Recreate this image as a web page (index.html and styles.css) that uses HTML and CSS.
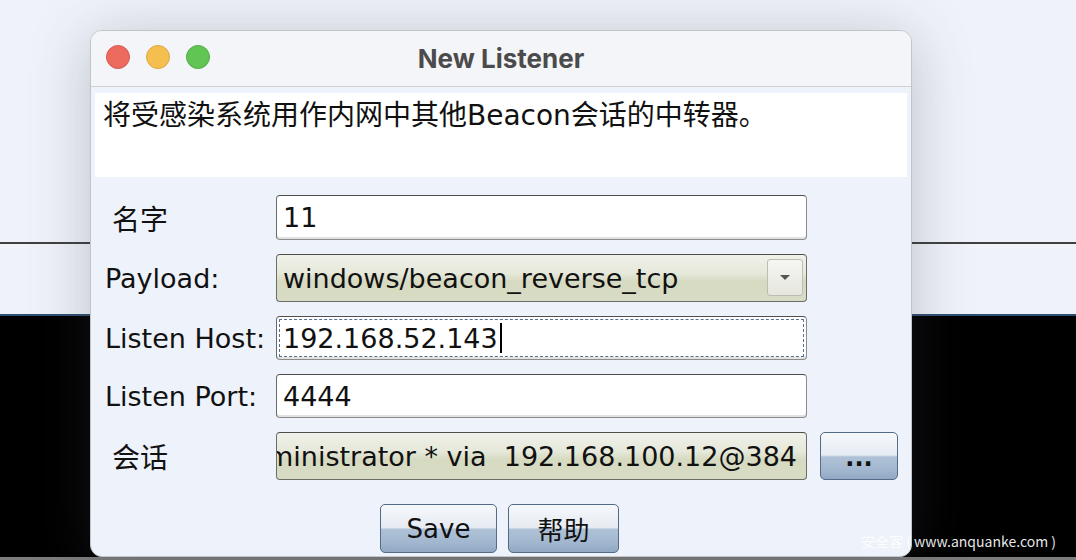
FILE: index.html
```html
<!DOCTYPE html>
<html lang="zh">
<head>
<meta charset="utf-8">
<title>New Listener</title>
<link rel="stylesheet" href="styles.css">
</head>
<body>
<div class="screen">
  <div class="desk"></div>
  <div class="rule-dark"></div>
  <div class="band"></div>
  <div class="rule-blue"></div>
  <div class="console"></div>
  <div class="floor"></div>

  <div class="dialog">
    <div class="titlebar">
      <div class="lights">
        <span class="light red"></span>
        <span class="light yellow"></span>
        <span class="light green"></span>
      </div>
      <div class="title">New Listener</div>
    </div>
    <div class="content">
      <div class="desc">将受感染系统用作内网中其他Beacon会话的中转器。</div>
      <div class="form">
        <div class="label indent">名字</div>
        <div class="field"><span class="val">11</span></div>
        <div></div>

        <div class="label">Payload:</div>
        <div class="field combo"><span class="val">windows/beacon_reverse_tcp</span><span class="arrow"><span class="tri"></span></span></div>
        <div></div>

        <div class="label">Listen Host:</div>
        <div class="field focus"><span class="val">192.168.52.143</span><span class="caret"></span></div>
        <div></div>

        <div class="label">Listen Port:</div>
        <div class="field"><span class="val">4444</span></div>
        <div></div>

        <div class="label indent">会话</div>
        <div class="field combo scrolled"><span class="val">Administrator * via&nbsp;&nbsp;192.168.100.12@384</span></div>
        <div class="btn dots">...</div>
      </div>
      <div class="actions">
        <div class="btn save">Save</div>
        <div class="btn help">帮助</div>
      </div>
    </div>
  </div>

  <div class="watermark">安全客 ( www.anquanke.com )</div>
</div>
</body>
</html>
```
FILE: styles.css
```css
html, body {
  margin: 0;
  padding: 0;
}
body {
  width: 1076px;
  height: 560px;
  overflow: hidden;
  background: #eff2f9;
  font-family: "DejaVu Sans", "Noto Sans CJK SC", sans-serif;
}
.screen {
  position: relative;
  width: 1076px;
  height: 560px;
  display: flex;
  flex-direction: column;
}
.desk { height: 242px; background: #eff2f9; }
.rule-dark { height: 2px; background: #404040; }
.band { height: 70px; background: #eff2f9; }
.rule-blue { height: 2px; background: #2f4f6f; }
.console { flex: 1; background: #000; }
.floor { height: 3px; background: #7d7d7d; }

.dialog {
  position: absolute;
  left: 90px;
  top: 30px;
  width: 822px;
  height: 527px;
  box-sizing: border-box;
  border: 1px solid #c3c4c8;
  border-radius: 12px;
  background: #eef2fa;
  box-shadow: 0 8px 60px rgba(60, 64, 80, 0.28);
  overflow: hidden;
}
.titlebar {
  position: relative;
  height: 55px;
  background: #f4f5f9;
  border-bottom: 1px solid #cfd0d4;
  display: flex;
  align-items: center;
  justify-content: center;
}
.lights {
  position: absolute;
  left: 15px;
  top: 14px;
  display: flex;
  gap: 16px;
}
.light {
  width: 24px;
  height: 24px;
  border-radius: 50%;
  box-sizing: border-box;
}
.red { background: #ed6a5e; border: 1px solid #d65a4f; }
.yellow { background: #f5bf4f; border: 1px solid #dca742; }
.green { background: #61c554; border: 1px solid #52ab46; }
.title {
  font-family: Inter, "Liberation Sans", sans-serif;
  font-weight: 700;
  font-size: 26px;
  color: #4b4b4b;
}
.content {
  padding: 6px 4px 0 4px;
}
.desc {
  height: 84px;
  box-sizing: border-box;
  background: #fff;
  padding: 6px 0 0 8px;
  font-size: 28px;
  color: #111;
  line-height: 34px;
}
.form {
  margin-top: 18px;
  padding-left: 10px;
  display: grid;
  grid-template-columns: 160px 531px 80px;
  grid-template-rows: 45px 48px 44px 44px 48px;
  column-gap: 11px;
  row-gap: 14px;
}
.form > .btn { margin-left: 2px; }
.label {
  display: flex;
  align-items: center;
  font-size: 27px;
  color: #111;
  white-space: nowrap;
}
.label.indent { padding-left: 7px; font-size: 28px; }
.field {
  position: relative;
  box-sizing: border-box;
  border: 1px solid #8c8c8c;
  border-top-color: #4f4f4f;
  border-left-color: #6a6a6a;
  border-radius: 4px;
  background: #fff;
  box-shadow: inset 0 -2px 0 #e2e2e2;
  display: flex;
  align-items: center;
  padding-left: 6px;
  font-size: 27px;
  color: #111;
  white-space: pre;
  overflow: hidden;
}
.field.combo {
  background: linear-gradient(to bottom, #f0f1ea 0%, #e6e8da 40%, #d6dac1 58%, #d8dcc4 100%);
  border-color: #6d6d68;
  border-top-color: #4d4d4a;
  box-shadow: none;
}
.arrow {
  position: absolute;
  right: 3px;
  top: 4px;
  bottom: 5px;
  width: 36px;
  box-sizing: border-box;
  border: 1px solid #bdbdb5;
  border-radius: 3px;
  background: linear-gradient(to bottom, #f6f6f2, #e6e6de);
  display: flex;
  align-items: center;
  justify-content: center;
}
.tri {
  width: 0;
  height: 0;
  border-left: 5px solid transparent;
  border-right: 5px solid transparent;
  border-top: 5px solid #555;
}
.field.focus {
  outline: 1px dashed #55708f;
  outline-offset: -4px;
}
.caret {
  width: 2px;
  height: 30px;
  background: #000;
  margin-left: 2px;
}
.field.scrolled {
  justify-content: flex-end;
  padding-left: 0;
  padding-right: 9px;
}
.btn {
  box-sizing: border-box;
  border: 1px solid #536b86;
  border-radius: 5px;
  background: linear-gradient(to bottom, #f6f8fb 0%, #e6ebf2 48%, #aec1d6 52%, #a2b7cf 80%, #91a8c3 100%);
  display: flex;
  align-items: center;
  justify-content: center;
  font-size: 26px;
  color: #111;
}
.dots {
  font-size: 24px;
  font-weight: 700;
  padding-top: 4px;
}
.actions {
  margin-top: 24px;
  padding-right: 3px;
  display: flex;
  justify-content: center;
  gap: 11px;
}
.save { width: 117px; height: 49px; }
.help { width: 111px; height: 49px; }
.watermark {
  position: absolute;
  left: 861px;
  top: 531px;
  font-family: "Noto Sans CJK SC", "Noto Sans", sans-serif;
  font-size: 14px;
  color: rgba(255, 255, 255, 0.92);
  white-space: pre;
}
```
